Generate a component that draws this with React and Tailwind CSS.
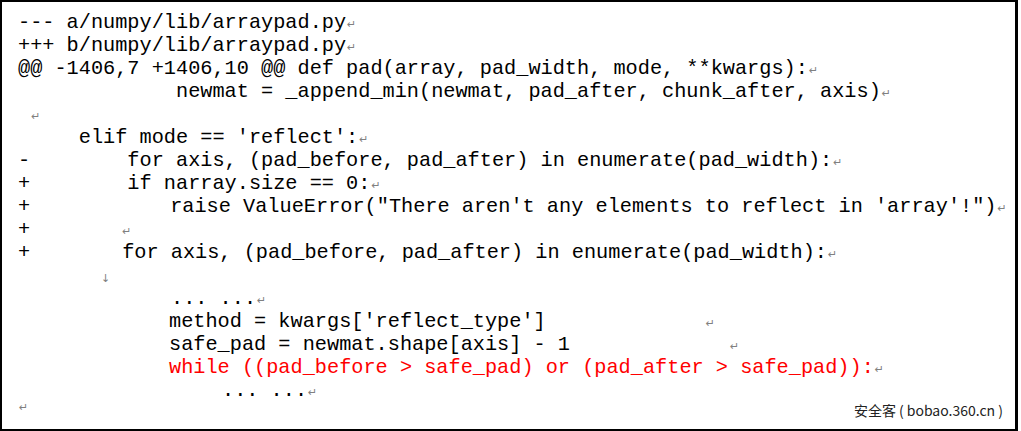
const mono = { fontFamily: '"Liberation Mono", "Courier New", monospace' };

const Mark = ({ className = '' }) => (
  <span
    className={`inline-block text-[11px] leading-none text-[#808080] ${className}`}
    style={{ fontFamily: '"DejaVu Sans", sans-serif' }}
  >
    ↵
  </span>
);

const LINES = [
  { text: '--- a/numpy/lib/arraypad.py', mark: true },
  { text: '+++ b/numpy/lib/arraypad.py', mark: true },
  { text: '@@ -1406,7 +1406,10 @@ def pad(array, pad_width, mode, **kwargs):', mark: true },
  { text: '             newmat = _append_min(newmat, pad_after, chunk_after, axis)', mark: true },
  { text: ' ', mark: true },
  { text: "     elif mode == 'reflect':", mark: true },
  { text: '-        for axis, (pad_before, pad_after) in enumerate(pad_width):', mark: true },
  { text: '+        if narray.size == 0:', mark: true },
  { prefix: '+', body: "raise ValueError(\"There aren't any elements to reflect in 'array'!\")", bodyClass: 'ml-[140px]', mark: true },
  { prefix: '+', body: '', bodyClass: 'ml-[91px]', mark: true },
  { prefix: '+', body: 'for axis, (pad_before, pad_after) in enumerate(pad_width):', bodyClass: 'ml-[92px]', mark: true },
  { arrow: true },
  { body: '... ...', bodyClass: 'ml-[153px]', mark: true },
  { body: "method = kwargs['reflect_type']", bodyClass: 'ml-[151px]', mark: true, markClass: 'ml-[160px]' },
  { body: 'safe_pad = newmat.shape[axis] - 1', bodyClass: 'ml-[151px]', mark: true, markClass: 'ml-[160px]' },
  { body: 'while ((pad_before > safe_pad) or (pad_after > safe_pad)):', bodyClass: 'ml-[151px] text-[#ff0000]', mark: true },
  { body: '... ...', bodyClass: 'ml-[204px]', mark: true },
  { text: '', mark: true },
];

const Line = ({ line }) => {
  if (line.arrow) {
    return (
      <div className="h-[23px] flex items-end pb-[3px]">
        <span
          className="ml-[83px] text-[11px] leading-none text-[#808080]"
          style={{ fontFamily: '"DejaVu Sans", sans-serif' }}
        >
          ↓
        </span>
      </div>
    );
  }
  return (
    <div className="h-[23px] leading-[23px] whitespace-pre flex items-baseline">
      {line.text !== undefined && <span>{line.text}</span>}
      {line.prefix && <span>{line.prefix}</span>}
      {line.body !== undefined && <span className={line.bodyClass}>{line.body}</span>}
      {line.mark && <Mark className={line.markClass || 'ml-[1px]'} />}
    </div>
  );
};

export default function App() {
  return (
    <div className="w-[1021px] h-[431px] bg-white">
      <div className="relative w-[1018px] h-[431px] border-2 border-r-[3px] border-black bg-white pl-[16px] pt-[9px] text-black">
        <div className="text-[20.25px]" style={mono}>
          {LINES.map((line, i) => (
            <Line key={i} line={line} />
          ))}
        </div>
        <div
          className="absolute right-[12px] bottom-[8px] flex items-center gap-[3px] text-[14px] text-[#222] [text-shadow:0_0_2px_#fff]"
          style={{ fontFamily: '"Noto Sans CJK SC", "Noto Sans", sans-serif' }}
        >
          <span>安全客</span>
          <span className="whitespace-pre">( bobao.360.cn )</span>
        </div>
      </div>
    </div>
  );
}
